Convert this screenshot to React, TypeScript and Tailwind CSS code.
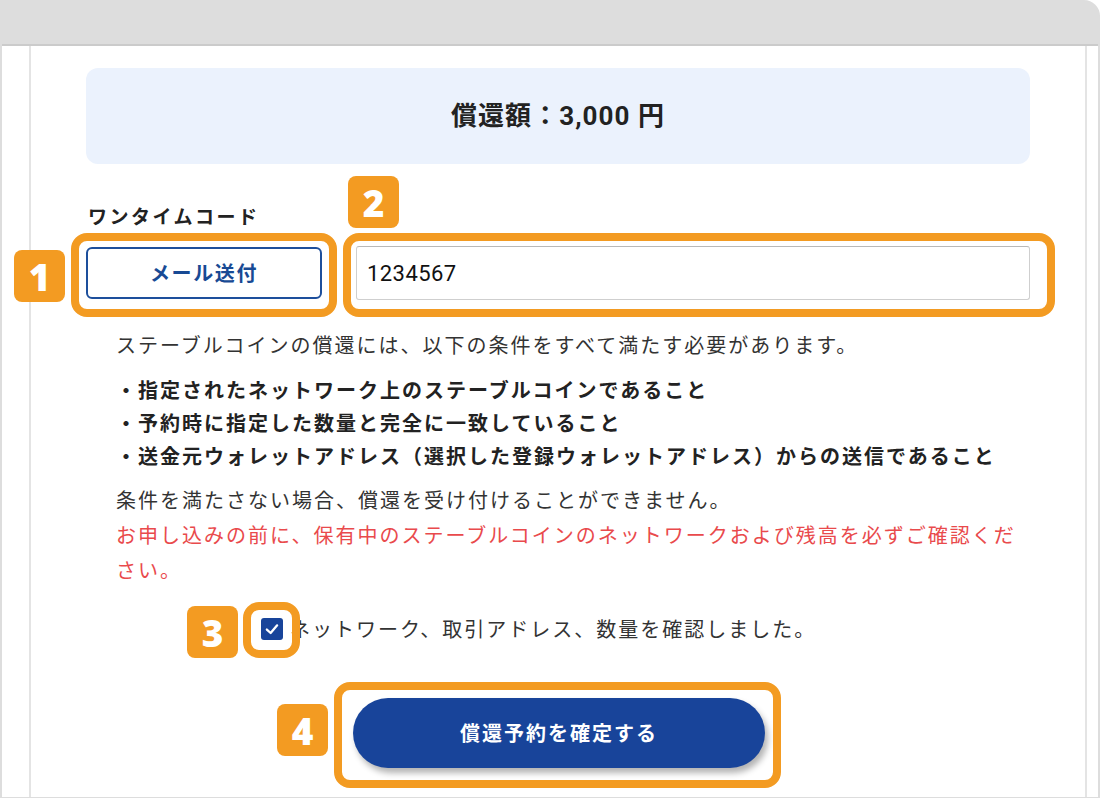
import React from 'react';

// annotation frame drawn over a control
function Frame({className}: {className: string}) {
    return <div className={`absolute border-[8px] border-[#F39B22] rounded-[16px] pointer-events-none ${className}`}/>
}

function Badge({n, className}: {n: number, className: string}) {
    return (
        <div className={`absolute w-[51px] h-[52px] bg-[#F39B22] rounded-[8px] flex items-center justify-center text-white text-[37px] font-extrabold font-['Open_Sans',sans-serif] leading-none ${className}`}>
            {n}
        </div>
    )
}

const bullets = [
    '・指定されたネットワーク上のステーブルコインであること',
    '・予約時に指定した数量と完全に一致していること',
    '・送金元ウォレットアドレス（選択した登録ウォレットアドレス）からの送信であること',
]

function App() {
    const [checked, setChecked] = React.useState(true)
    const [code, setCode] = React.useState('1234567')

    return (
        <div className="relative w-[1100px] h-[798px] bg-white overflow-hidden font-['Noto_Sans_CJK_JP',sans-serif]">
            <div className="h-full bg-[#dddddd] rounded-tr-[16px] flex flex-col px-[2px] pb-[1px]">
                <div className="h-[46px] shrink-0 border-b-2 border-[#cbcbcb]"/>

                <div className="flex-1 bg-white pl-[27px] pr-[11px] flex">
                    <div className="flex-1 border-x-2 border-[#e4e4e4] px-[55px] pt-[22px] flex flex-col">
                        <div className="h-[96px] rounded-[12px] bg-[#EBF2FD] flex items-center justify-center">
                            <p className="text-[26px] font-bold text-[#222] tracking-[0.04em] font-['Roboto','Noto_Sans_CJK_JP',sans-serif]">
                                償還額：3,000 円
                            </p>
                        </div>

                        <p className="mt-[40px] pl-[2px] h-[24px] leading-[24px] text-[19px] tracking-[0.13em] font-bold text-[#222]">ワンタイムコード</p>

                        <div className="mt-[18px] flex items-center h-[54px]">
                            <button className="w-[236px] h-[52px] border-2 border-[#1D4F9C] rounded-[6px] text-[#184A94] text-[20px] tracking-[0.08em] font-bold bg-white">
                                メール送付
                            </button>
                            <input
                                value={code}
                                onChange={(e) => setCode(e.target.value)}
                                className="ml-[34px] flex-1 h-[54px] border border-[#cfcfcf] border-t-[#b9b9b9] rounded-[3px] pl-[10px] text-[22px] tracking-[0.02em] text-[#111] font-['Roboto',sans-serif] outline-none"
                            />
                        </div>

                        <div className="mt-[28px] pl-[30px] text-[20px] tracking-[0.1em] text-[#333]">
                            <p className="leading-[34px]">ステーブルコインの償還には、以下の条件をすべて満たす必要があります。</p>
                            <ul className="mt-[11px] font-bold text-[#222]">
                                {bullets.map((b) => (
                                    <li key={b} className="leading-[33px]">{b}</li>
                                ))}
                            </ul>
                            <p className="mt-[11px] leading-[34px]">条件を満たさない場合、償還を受け付けることができません。</p>
                            <p className="leading-[35px] text-[#E94A4C]">
                                お申し込みの前に、保有中のステーブルコインのネットワークおよび残高を必ずご確認ください。
                            </p>
                        </div>

                        <label className="mt-[25px] pl-[175px] h-[34px] flex items-center cursor-pointer">
                            <span
                                onClick={() => setChecked(!checked)}
                                className={`w-[22px] h-[22px] rounded-[3px] flex items-center justify-center ${checked ? 'bg-[#18449A]' : 'border border-[#999] bg-white'}`}
                            >
                                {checked && (
                                    <svg width="16" height="16" viewBox="0 0 14 14" fill="none">
                                        <path d="M2.5 7.5 L5.8 10.5 L11.5 3.8" stroke="white" strokeWidth="2" strokeLinecap="round" strokeLinejoin="round"/>
                                    </svg>
                                )}
                            </span>
                            <span className="ml-[7px] text-[20px] tracking-[0.1em] text-[#333]">ネットワーク、取引アドレス、数量を確認しました。</span>
                        </label>

                        <button className="mt-[52px] ml-[267px] w-[412px] h-[70px] rounded-full bg-[#18449A] text-white text-[20px] font-bold tracking-[0.1em] shadow-[3px_5px_6px_rgba(0,0,0,0.3)]">
                            償還予約を確定する
                        </button>
                    </div>
                </div>
            </div>

            {/* annotation overlays */}
            <Frame className="left-[71px] top-[233px] w-[266px] h-[84px]"/>
            <Frame className="left-[343px] top-[233px] w-[712px] h-[84px]"/>
            <Frame className="left-[243px] top-[602px] w-[57px] h-[56px] rounded-[14px]"/>
            <Frame className="left-[334px] top-[682px] w-[447px] h-[106px]"/>

            <Badge n={1} className="left-[14px] top-[250px]"/>
            <Badge n={2} className="left-[348px] top-[176px]"/>
            <Badge n={3} className="left-[187px] top-[606px]"/>
            <Badge n={4} className="left-[277px] top-[704px]"/>
        </div>
    );
}

export default App;
